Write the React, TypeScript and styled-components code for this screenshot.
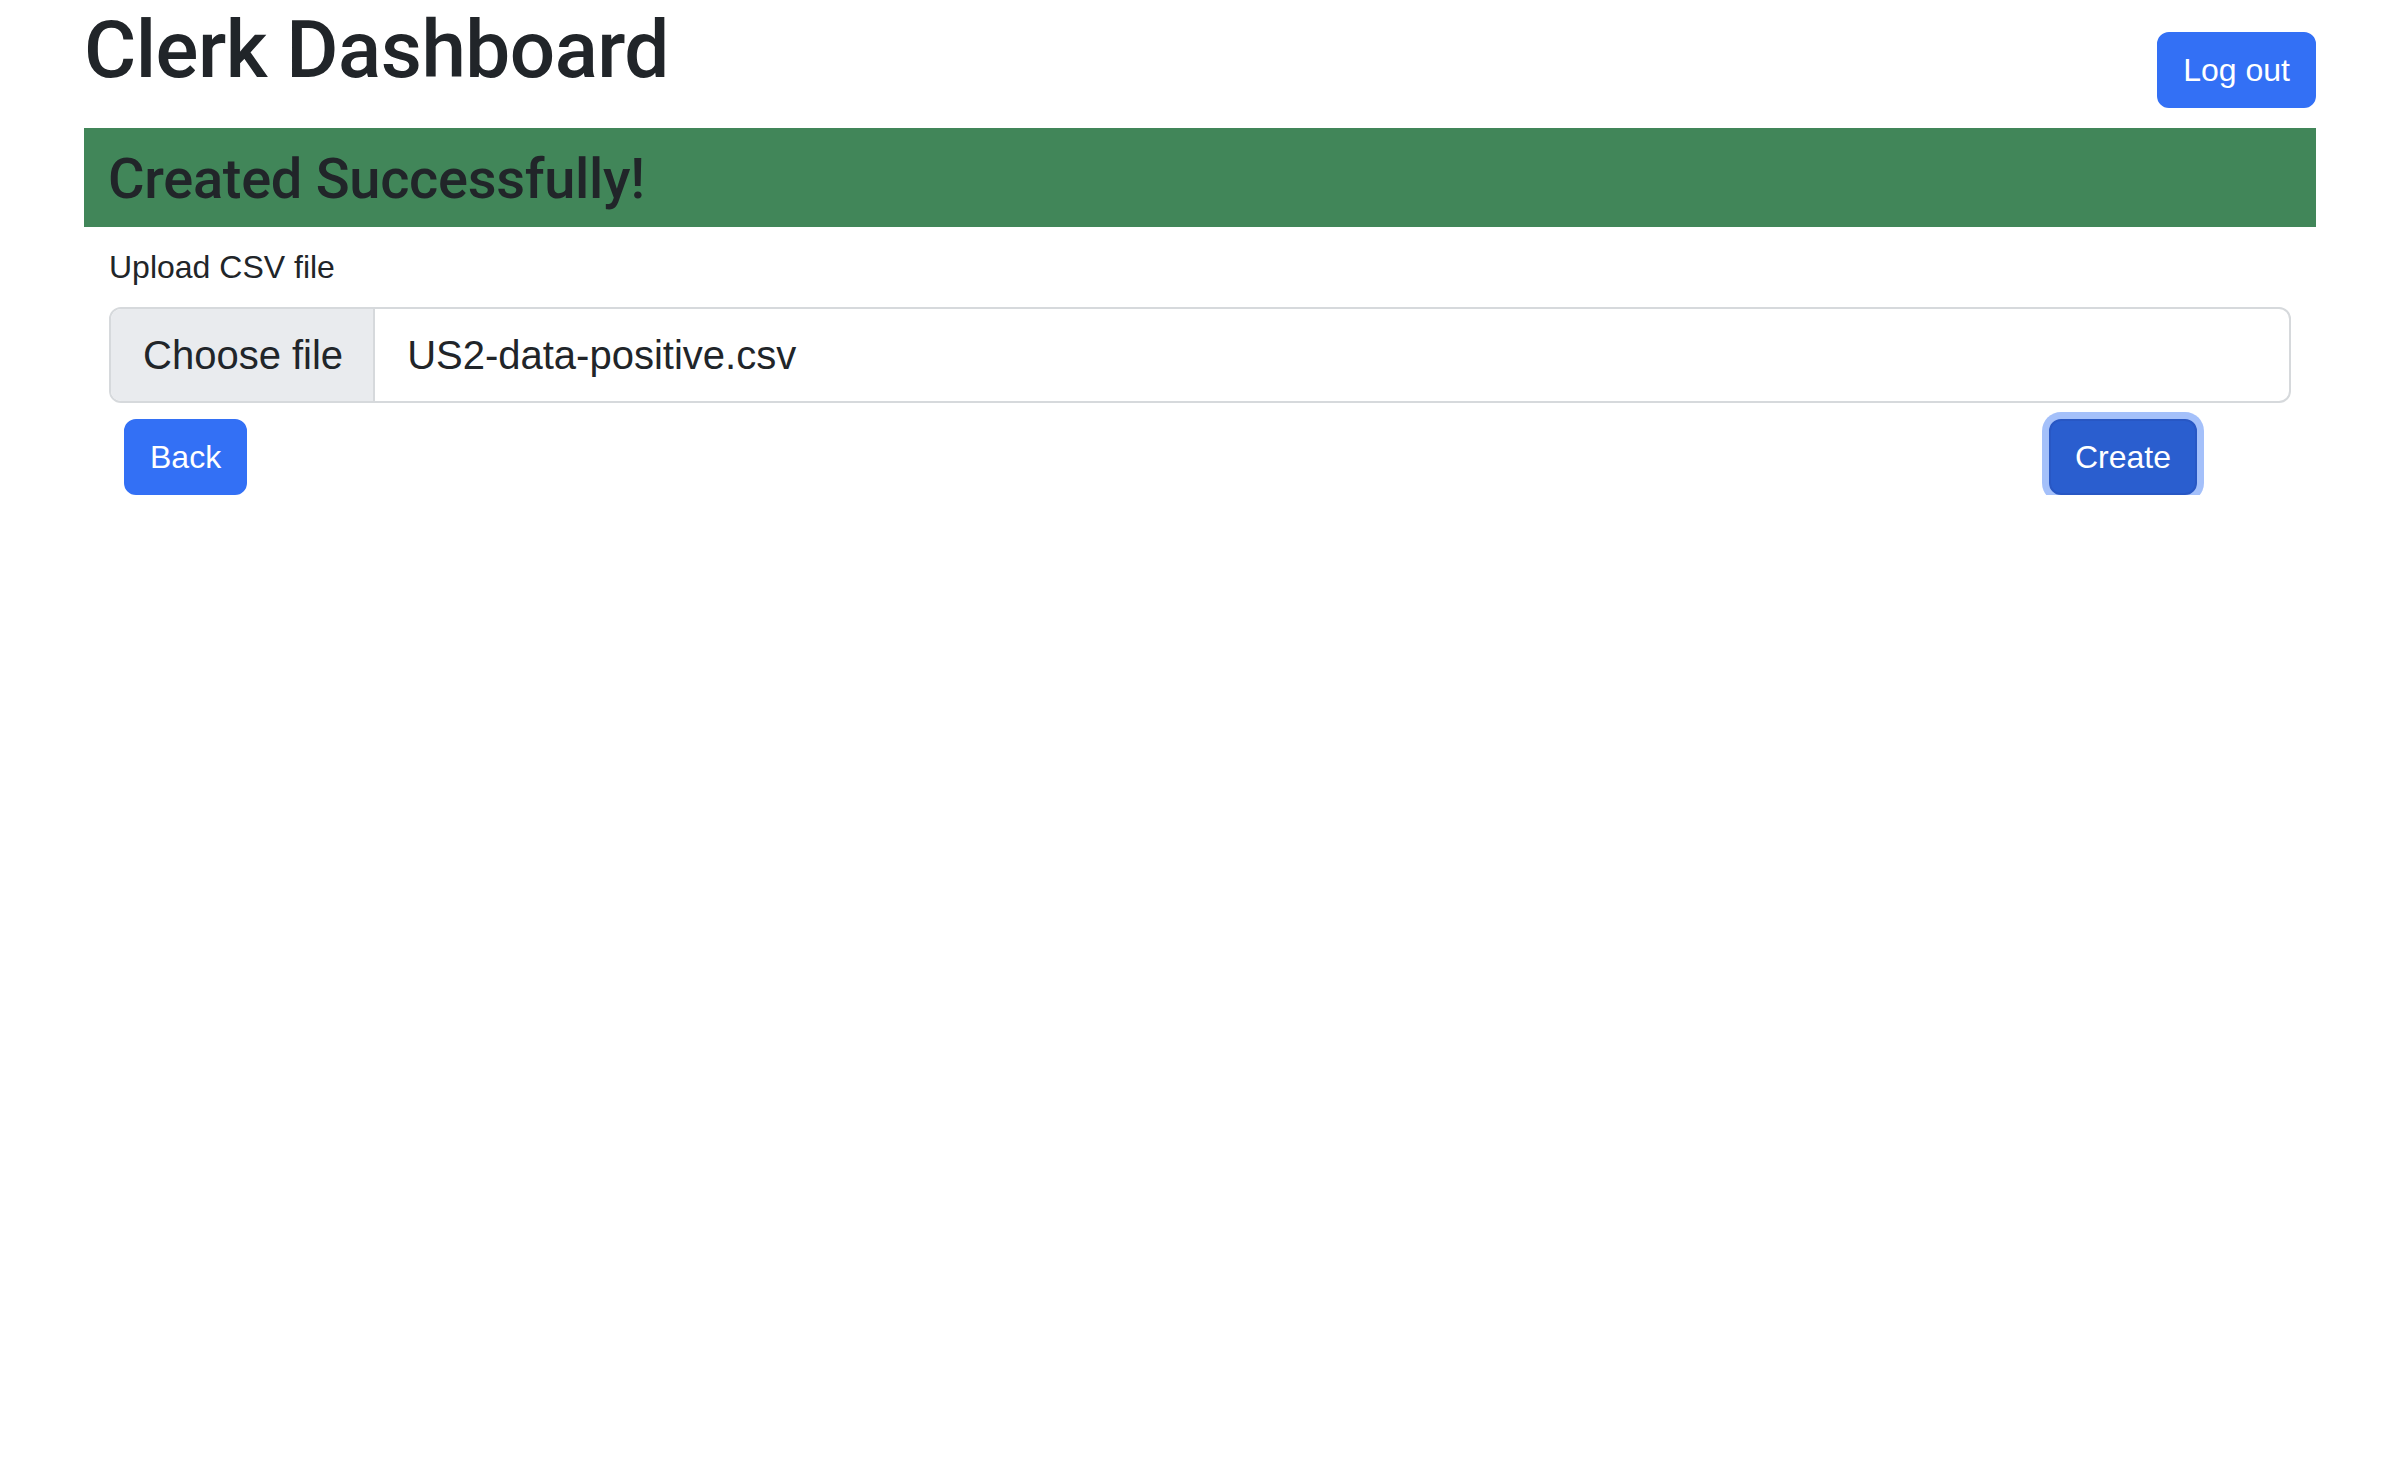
import React from "react";
import styled, { createGlobalStyle } from "styled-components";

const GlobalStyle = createGlobalStyle`
    html, body {
        margin: 0;
        padding: 0;
        background: #fff;
    }
    body {
        font-family: "Liberation Sans", Arial, sans-serif;
        color: #212529;
    }
`;

export default function App() {
    return (
        <>
            <GlobalStyle />
            <Container>
                <Header>
                    <Title>Clerk Dashboard</Title>
                    <Button>Log out</Button>
                </Header>
                <Alert>
                    <AlertText>Created Successfully!</AlertText>
                </Alert>
                <Form>
                    <Label>Upload CSV file</Label>
                    <FileInput>
                        <ChooseButton>Choose file</ChooseButton>
                        <FileName>US2-data-positive.csv</FileName>
                    </FileInput>
                    <Actions>
                        <Button>Back</Button>
                        <Button focused>Create</Button>
                    </Actions>
                </Form>
            </Container>
        </>
    );
}

const Container = styled.div`
    padding: 0 84px;
`;

const Header = styled.div`
    display: flex;
    justify-content: space-between;
    align-items: flex-start;
    margin-bottom: 20px;
`;

const Title = styled.h1`
    margin: 2px 0 0;
    font-family: Roboto, "Liberation Sans", sans-serif;
    font-size: 80px;
    line-height: 96px;
    font-weight: 500;
    letter-spacing: -0.5px;
    color: #212529;
`;

const Button = styled.button<{ focused?: boolean }>`
    font-family: "Liberation Sans", Arial, sans-serif;
    font-size: 32px;
    line-height: 48px;
    padding: 12px 24px;
    border-radius: 12px;
    color: #fff;
    cursor: pointer;
    background: ${({ focused }) => (focused ? "#2a5ecf" : "#3370f5")};
    border: 2px solid ${({ focused }) => (focused ? "#2857c4" : "#3370f5")};
    box-shadow: ${({ focused }) => (focused ? "0 0 0 7px #a4c0fa" : "none")};
    ${Header} & {
        margin-top: 32px;
    }
`;

const Alert = styled.div`
    background: #418659;
    padding: 18px 24px 14px;
`;

const AlertText = styled.h3`
    margin: 0;
    font-family: Roboto, "Liberation Sans", sans-serif;
    font-size: 56px;
    line-height: 67px;
    font-weight: 500;
    letter-spacing: -0.3px;
    color: #212529;
`;

const Form = styled.div`
    padding: 16px 25px 0 25px;
`;

const Label = styled.label`
    display: block;
    font-size: 32px;
    line-height: 48px;
    margin-bottom: 16px;
`;

const FileInput = styled.div`
    display: flex;
    border: 2px solid #d6d9dc;
    border-radius: 12px;
    overflow: hidden;
    font-size: 40px;
    line-height: 60px;
`;

const ChooseButton = styled.div`
    background: #e9ebee;
    padding: 16px 30px 16px 32px;
    border-right: 2px solid #d6d9dc;
`;

const FileName = styled.div`
    flex: 1;
    padding: 16px 32px;
`;

const Actions = styled.div`
    display: flex;
    justify-content: space-between;
    align-items: center;
    margin-top: 16px;
    padding: 0 94px 0 15px;
`;
